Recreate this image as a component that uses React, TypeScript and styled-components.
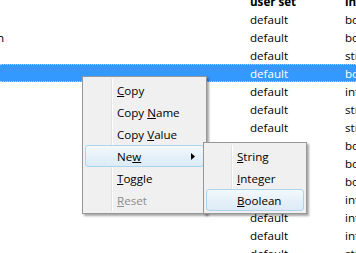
import React from "react";
import styled, { createGlobalStyle } from "styled-components";

const GlobalStyle = createGlobalStyle`
  html, body {
    margin: 0;
    padding: 0;
    background: #ffffff;
  }
  body {
    font-family: "Segoe UI", "Open Sans", sans-serif;
    font-size: 11.6px;
    color: #000000;
    overflow: hidden;
  }
`;

const Page = styled.div`
  position: relative;
  width: 356px;
  height: 253px;
  overflow: hidden;
  background: #ffffff;
`;

const Table = styled.div`
  display: flex;
  flex-direction: column;
  margin-top: -8px;
`;

const Row = styled.div<{ $selected?: boolean; $header?: boolean }>`
  display: grid;
  grid-template-columns: 250px 95px 1fr;
  height: 18px;
  box-sizing: border-box;
  align-items: center;
  white-space: nowrap;
  font-weight: ${(p) => (p.$header ? 700 : 400)};
  background: ${(p) => (p.$selected ? "#3399ff" : "transparent")};
  color: ${(p) => (p.$selected ? "#ffffff" : "#000000")};
  border-top: 1px dotted ${(p) => (p.$selected ? "#a6cffb" : "transparent")};
  border-bottom: 1px dotted ${(p) => (p.$selected ? "#a6cffb" : "transparent")};
`;

const NameCell = styled.div`
  display: flex;
  justify-content: flex-end;
  width: 4px;
  overflow: hidden;
`;

const Cell = styled.div`
  overflow: hidden;
`;

const Menu = styled.div<{ $left: number; $top: number; $width: number; $gutter: number }>`
  position: absolute;
  left: ${(p) => p.$left}px;
  top: ${(p) => p.$top}px;
  width: ${(p) => p.$width}px;
  box-sizing: border-box;
  display: flex;
  flex-direction: column;
  padding: 2px;
  background: #f0f0f0;
  border: 1px solid #979797;
  box-shadow: 2px 2px 2px rgba(0, 0, 0, 0.35);
  z-index: 2;

  &::before {
    content: "";
    position: absolute;
    left: ${(p) => p.$gutter}px;
    top: 2px;
    bottom: 2px;
    width: 1px;
    background: #e2e3e3;
    border-right: 1px solid #ffffff;
  }
`;

const Item = styled.div<{ $active?: boolean; $disabled?: boolean; $indent: number }>`
  position: relative;
  z-index: 1;
  display: flex;
  align-items: center;
  justify-content: space-between;
  height: 22px;
  box-sizing: border-box;
  padding-left: ${(p) => p.$indent}px;
  padding-right: 8px;
  border: 1px solid ${(p) => (p.$active ? "#aed3ec" : "transparent")};
  border-radius: 3px;
  background: ${(p) =>
    p.$active ? "linear-gradient(to bottom, #f3f9fd 0%, #e6f1f9 50%, #dcebf6 100%)" : "transparent"};
  color: ${(p) => (p.$disabled ? "#8d8d8d" : "#000000")};
  white-space: nowrap;
`;

const Key = styled.span`
  text-decoration: underline;
  text-underline-offset: 1px;
`;

const Arrow = styled.svg`
  display: block;
  width: 4px;
  height: 7px;
`;

type Entry = { name?: string; type: string; selected?: boolean };

const rows: Entry[] = [
  { type: "boolean" },
  { type: "boolean", name: "browser.tabs.warnOnOpen" },
  { type: "string" },
  { type: "boolean", selected: true },
  { type: "integer" },
  { type: "string" },
  { type: "string" },
  { type: "boolean" },
  { type: "boolean" },
  { type: "boolean" },
  { type: "integer" },
  { type: "integer" },
  { type: "integer" },
  { type: "string" },
];

const Label: React.FC<{ before?: string; k: string; after?: string }> = ({ before, k, after }) => (
  <span>
    {before}
    <Key>{k}</Key>
    {after}
  </span>
);

export default function App() {
  return (
    <Page>
      <GlobalStyle />
      <Table>
        <Row $header>
          <Cell />
          <Cell>user set</Cell>
          <Cell>info</Cell>
        </Row>
        {rows.map((r, i) => (
          <Row key={i} $selected={r.selected}>
            <NameCell>{r.name ?? ""}</NameCell>
            <Cell>default</Cell>
            <Cell>{r.type}</Cell>
          </Row>
        ))}
      </Table>

      <Menu $left={82} $top={76} $width={125} $gutter={28}>
        <Item $indent={31}>
          <Label k="C" after="opy" />
        </Item>
        <Item $indent={31}>
          <Label before="Copy " k="N" after="ame" />
        </Item>
        <Item $indent={31}>
          <Label before="Copy " k="V" after="alue" />
        </Item>
        <Item $indent={31} $active>
          <Label before="Ne" k="w" />
          <Arrow viewBox="0 0 4 7">
            <polygon points="0,0 4,3.5 0,7" fill="#000000" />
          </Arrow>
        </Item>
        <Item $indent={31}>
          <Label k="T" after="oggle" />
        </Item>
        <Item $indent={31} $disabled>
          <Label k="R" after="eset" />
        </Item>
      </Menu>

      <Menu $left={203} $top={142} $width={104} $gutter={27}>
        <Item $indent={30}>
          <Label k="S" after="tring" />
        </Item>
        <Item $indent={30}>
          <Label k="I" after="nteger" />
        </Item>
        <Item $indent={30} $active>
          <Label k="B" after="oolean" />
        </Item>
      </Menu>
    </Page>
  );
}
